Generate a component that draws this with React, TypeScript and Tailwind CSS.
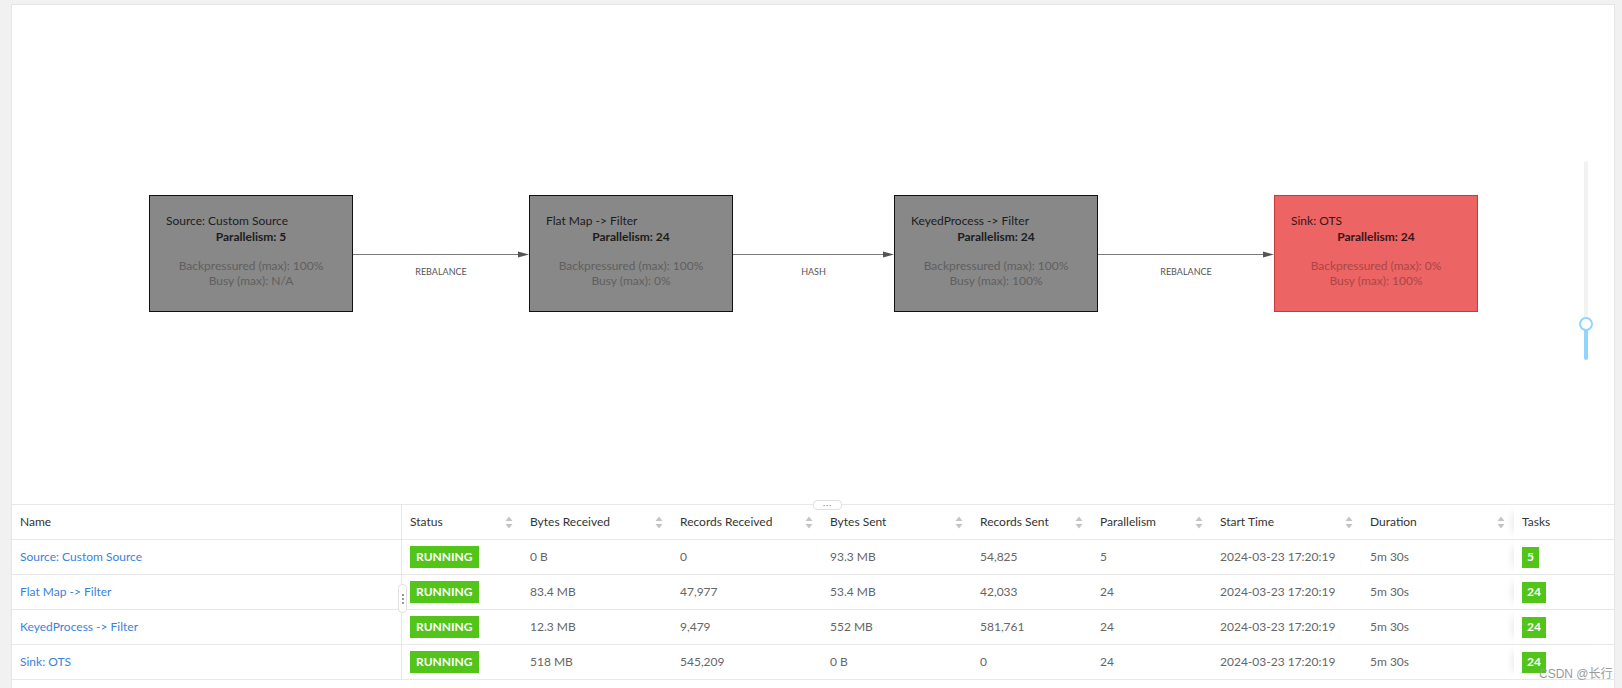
import React from "react";

const font = { fontFamily: "Lato, 'Liberation Sans', Arial, sans-serif" };

type Node = {
  left: number;
  name: string;
  parallelism: string;
  backpressured: string;
  busy: string;
  hot?: boolean;
};

const nodes: Node[] = [
  { left: 137, name: "Source: Custom Source", parallelism: "5", backpressured: "100%", busy: "N/A" },
  { left: 517, name: "Flat Map -> Filter", parallelism: "24", backpressured: "100%", busy: "0%" },
  { left: 882, name: "KeyedProcess -> Filter", parallelism: "24", backpressured: "100%", busy: "100%" },
  { left: 1262, name: "Sink: OTS", parallelism: "24", backpressured: "0%", busy: "100%", hot: true },
];

const edges = [
  { from: 341, to: 517, label: "REBALANCE" },
  { from: 721, to: 882, label: "HASH" },
  { from: 1086, to: 1262, label: "REBALANCE" },
];

const rows = [
  { name: "Source: Custom Source", br: "0 B", rr: "0", bs: "93.3 MB", rs: "54,825", p: "5" },
  { name: "Flat Map -> Filter", br: "83.4 MB", rr: "47,977", bs: "53.4 MB", rs: "42,033", p: "24" },
  { name: "KeyedProcess -> Filter", br: "12.3 MB", rr: "9,479", bs: "552 MB", rs: "581,761", p: "24" },
  { name: "Sink: OTS", br: "518 MB", rr: "545,209", bs: "0 B", rs: "0", p: "24" },
];

const cols = "grid grid-cols-[390px_120px_150px_150px_150px_120px_120px_150px_152px_100px]";

function SortIcon() {
  return (
    <svg width="8" height="13" viewBox="0 0 8 13" className="shrink-0">
      <path d="M4 0.5 L7.5 5 L0.5 5 Z" fill="#c4c4c4" />
      <path d="M4 12.5 L7.5 8 L0.5 8 Z" fill="#c4c4c4" />
    </svg>
  );
}

function HeadCell({ label, sort = true }: { label: string; sort?: boolean }) {
  return (
    <div className="flex items-center justify-between pl-2 pr-[9px]">
      <span>{label}</span>
      {sort && <SortIcon />}
    </div>
  );
}

function GraphNode({ n }: { n: Node }) {
  return (
    <div
      className={
        "absolute top-[190px] h-[117px] w-[204px] border px-4 pt-[17px] text-[12px] " +
        (n.hot ? "border-[#c9393b] bg-[#ec6464]" : "border-[#111] bg-[#888888]")
      }
      style={{ left: n.left }}
    >
      <div className={"leading-[16px] " + (n.hot ? "text-[#3a1414]" : "text-[#1c1c1c]")}>{n.name}</div>
      <div className={"text-center font-bold leading-[16px] " + (n.hot ? "text-[#3a1414]" : "text-[#1c1c1c]")}>
        Parallelism: {n.parallelism}
      </div>
      <div className={"mt-[13px] text-center leading-[15px] " + (n.hot ? "text-[#a84747]" : "text-[#5f5f5f]")}>
        <div>Backpressured (max): {n.backpressured}</div>
        <div>Busy (max): {n.busy}</div>
      </div>
    </div>
  );
}

export default function App() {
  return (
    <div className="relative h-[688px] w-full overflow-hidden bg-[#f1f1f1] pl-[12px] pr-[8px] pt-[5px]" style={font}>
      <div className="flex h-[700px] flex-col bg-white ring-1 ring-[#e6e6e6]">
        {/* job graph */}
        <div className="relative h-[499px] shrink-0">
          <svg className="absolute inset-0" width="1602" height="499">
            {edges.map((e) => (
              <g key={e.from}>
                <line x1={e.from} y1={249.5} x2={e.to - 9} y2={249.5} stroke="#7a7a7a" strokeWidth="1" />
                <path d={`M${e.to - 11} 246.5 L${e.to} 249.5 L${e.to - 11} 252.5 Z`} fill="#555" />
              </g>
            ))}
          </svg>
          {edges.map((e) => (
            <div
              key={e.label + e.from}
              className="absolute top-[261px] -translate-x-1/2 text-[9px] leading-[12px] text-[#555]"
              style={{ left: (e.from + e.to) / 2 }}
            >
              {e.label}
            </div>
          ))}
          {nodes.map((n) => (
            <GraphNode key={n.name} n={n} />
          ))}
          {/* zoom slider */}
          <div className="absolute left-[1572px] top-[156px] flex h-[199px] w-[4px] flex-col items-center">
            <div className="w-[4px] flex-1 rounded-t-full bg-[#f2f2f2]" />
            <div className="h-[36px] w-[4px] rounded-b-full bg-[#91d5ff]" />
            <div className="absolute top-[156px] left-[-5px] h-[14px] w-[14px] rounded-full border-2 border-[#91d5ff] bg-white" />
          </div>
        </div>

        {/* vertex table */}
        <div className="relative border-t border-[#e8e8e8] text-[12px]">
          <div className="absolute left-[801px] top-[-5px] flex h-[10px] w-[29px] items-center justify-center rounded-sm border border-[#e0e0e0] bg-white text-[8px] leading-none tracking-[1px] text-[#777]">
            ···
          </div>
          <div className="absolute left-[386px] top-[79px] z-10 flex h-[29px] w-[9px] flex-col items-center justify-center gap-[2px] rounded-sm border border-[#e0e0e0] bg-white">
            <span className="h-[2px] w-[2px] rounded-full bg-[#777]" />
            <span className="h-[2px] w-[2px] rounded-full bg-[#777]" />
            <span className="h-[2px] w-[2px] rounded-full bg-[#777]" />
          </div>

          <div className={cols + " h-[35px] border-b border-[#e8e8e8] text-[#333]"}>
            <div className="flex items-center border-r border-[#e8e8e8] pl-2">Name</div>
            <HeadCell label="Status" />
            <HeadCell label="Bytes Received" />
            <HeadCell label="Records Received" />
            <HeadCell label="Bytes Sent" />
            <HeadCell label="Records Sent" />
            <HeadCell label="Parallelism" />
            <HeadCell label="Start Time" />
            <HeadCell label="Duration" />
            <div className="flex items-center bg-white pl-2 shadow-[-8px_0_8px_-7px_rgba(0,0,0,0.1)]">Tasks</div>
          </div>

          {rows.map((r) => (
            <div key={r.name} className={cols + " h-[35px] border-b border-[#e8e8e8] text-[#666]"}>
              <div className="flex items-center border-r border-[#e8e8e8] pl-2 text-[#3b82dc]">{r.name}</div>
              <div className="flex items-center pl-2">
                <span className="flex h-[22px] items-center bg-[#52c41a] px-[6px] font-bold text-white">RUNNING</span>
              </div>
              <div className="flex items-center pl-2">{r.br}</div>
              <div className="flex items-center pl-2">{r.rr}</div>
              <div className="flex items-center pl-2">{r.bs}</div>
              <div className="flex items-center pl-2">{r.rs}</div>
              <div className="flex items-center pl-2">{r.p}</div>
              <div className="flex items-center pl-2">2024-03-23 17:20:19</div>
              <div className="flex items-center pl-2">5m 30s</div>
              <div className="flex items-center bg-white pl-2 shadow-[-8px_0_8px_-7px_rgba(0,0,0,0.1)]">
                <span className="flex h-[21px] items-center bg-[#52c41a] px-[5px] font-bold text-white">{r.p}</span>
              </div>
            </div>
          ))}
        </div>
      </div>

      <div
        className="absolute left-[1539px] top-[665px] text-[12px] text-[#9a9a9a]"
        style={{ fontFamily: "'Liberation Sans', 'Noto Sans CJK SC', sans-serif" }}
      >
        CSDN @长行
      </div>
    </div>
  );
}
